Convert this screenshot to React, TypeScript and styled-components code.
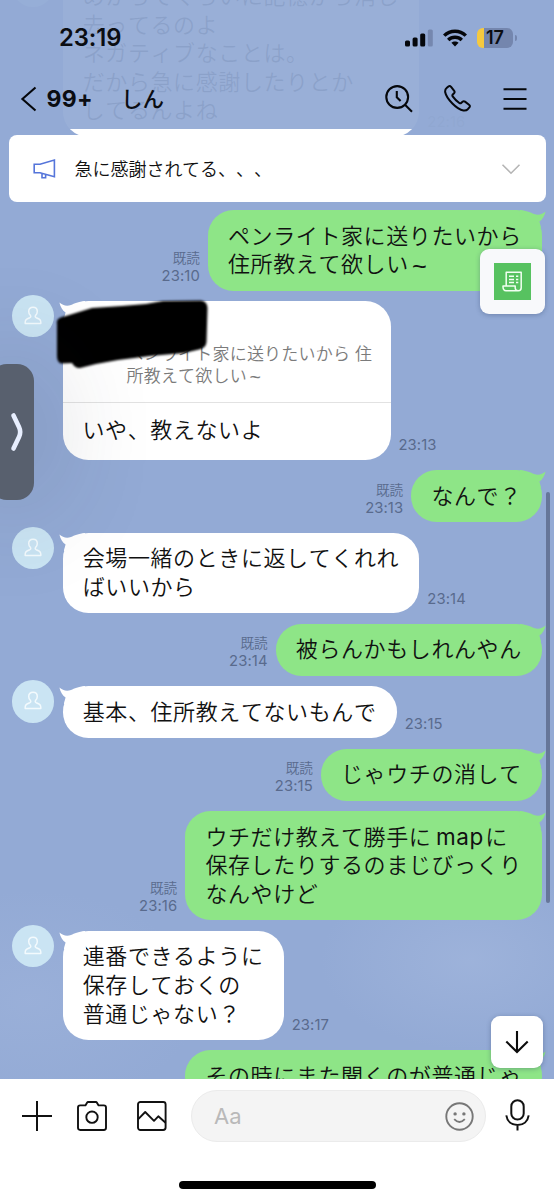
import React from "react";
import styled, { createGlobalStyle } from "styled-components";

const GlobalStyle = createGlobalStyle`
  * { box-sizing: border-box; }
  body { margin: 0; background: #fff; }
`;

const Screen = styled.div`
  position: relative;
  width: 554px;
  height: 1200px;
  display: flex;
  flex-direction: column;
  overflow: hidden;
  background: #fff;
  color: #111;
  font-family: Inter, "Noto Sans CJK JP", sans-serif;
  text-spacing-trim: space-all;
`;

const Chat = styled.main`
  position: relative;
  height: 1079px;
  flex: none;
  overflow: hidden;
  display: flex;
  flex-direction: column;
  justify-content: flex-start;
  gap: 10.25px;
  background:
    radial-gradient(ellipse 150px 90px at 470px 960px, rgba(164, 184, 222, 0.6), transparent),
    radial-gradient(ellipse 170px 110px at 30px 1000px, rgba(158, 179, 219, 0.6), transparent),
    #93aad5;
`;

const MessageRow = styled.div<{ $sent?: boolean }>`
  display: flex;
  flex: none;
  flex-direction: ${(p) => (p.$sent ? "row-reverse" : "row")};
  align-items: flex-end;
  padding: 0 12px 0 11.5px;
`;

const EarlierRow = styled(MessageRow)`
  margin-top: -29.8px;
  margin-bottom: 62.9px;
`;

const Avatar = styled.div`
  width: 42.5px;
  height: 42.5px;
  margin-top: -6px;
  margin-right: 8.5px;
  align-self: flex-start;
  flex: none;
  border-radius: 50%;
  background: #cae4f3;
  display: flex;
  align-items: center;
  justify-content: center;
`;

const Bubble = styled.div<{ $sent?: boolean }>`
  position: relative;
  flex: none;
  padding: 11.8px 20.2px;
  border-radius: 25.5px;
  background: ${(p) => (p.$sent ? "#8ee587" : "#fff")};
  font-size: 22px;
  font-weight: 350;
  font-kerning: none;
  letter-spacing: 0.6px;
  line-height: 28.6px;
  white-space: nowrap;
`;

const ReplyBubble = styled(Bubble)`
  width: 328px;
  height: 159px;
  padding: 0;
`;

const Quote = styled.div`
  height: 102px;
  padding: 42px 0 0 64px;
  border-bottom: 1px solid #e2e2e2;
  color: #7b7b7b;
  font-size: 17px;
  letter-spacing: 0.2px;
  line-height: 22px;
`;

const ReplyText = styled.div`
  padding: 13px 20px 0;
`;

const Tilde = styled.span`
  position: relative;
  top: 0.12em;
  margin-left: 0.13em;
  font-family: "Liberation Sans", sans-serif;
  font-size: 1.15em;
  line-height: 1;
`;

const Latin = styled.span`
  margin: 0 1.5px 0 4.5px;
  font-size: 22.5px;
  font-weight: 400;
  line-height: 1;
`;

const TailSvg = styled.svg<{ $sent?: boolean }>`
  position: absolute;
  top: 0;
  ${(p) => (p.$sent ? "right: -4px; transform: scaleX(-1);" : "left: -4px;")}
`;

const Scribble = styled.svg`
  position: absolute;
  left: -13px;
  top: -6px;
`;

const Meta = styled.div<{ $sent?: boolean }>`
  padding: 0 8px 5.5px;
  text-align: ${(p) => (p.$sent ? "right" : "left")};
  color: #596a8d;
  font-size: 14.8px;
  line-height: 18px;
  letter-spacing: 0.1px;
`;

const ReadMark = styled.div`
  font-size: 13.6px;
  font-weight: 350;
  letter-spacing: 0;
`;

const Header = styled.header`
  position: absolute;
  inset: 0 0 auto 0;
  height: 129px;
  display: flex;
  flex-direction: column;
  background: rgba(147, 170, 213, 0.945);
  color: #0b0d12;
`;

const StatusBar = styled.div`
  display: flex;
  align-items: center;
  height: 72px;
  padding: 3px 41px 0 59px;
`;

const Clock = styled.div`
  flex: 1;
  font-size: 23.8px;
  font-weight: 600;
  letter-spacing: -0.1px;
`;

const StatusIcons = styled.div`
  display: flex;
  align-items: center;
  gap: 10px;
`;

const Battery = styled.div`
  position: relative;
  width: 36px;
  height: 20px;
  border-radius: 6px;
  background: linear-gradient(90deg, #f5c93f 0 7px, #7486ae 7px);
  font-size: 18px;
  font-weight: 600;
  line-height: 20px;
  text-align: center;
  &::after {
    content: "";
    position: absolute;
    right: -3.5px;
    top: 7px;
    width: 2px;
    height: 6px;
    border-radius: 0 2px 2px 0;
    background: #7486ae;
  }
`;

const NavBar = styled.nav`
  display: flex;
  align-items: center;
  height: 53px;
  padding: 0 27.5px 0 20px;
`;

const Unread = styled.span`
  margin-left: 9.5px;
  width: 74.5px;
  font-size: 23px;
  font-weight: 650;
  letter-spacing: 0.3px;
`;

const ChatTitle = styled.h1`
  flex: 1;
  margin: -3px 0 0;
  font-size: 21.5px;
  font-weight: 500;
`;

const NavIcons = styled.div`
  display: flex;
  align-items: center;
  gap: 31.5px;
`;

const Announcement = styled.section`
  position: absolute;
  left: 8.5px;
  right: 8.5px;
  top: 135px;
  height: 67px;
  padding: 0 24.5px 0 24px;
  display: flex;
  align-items: center;
  border-radius: 8px;
  background: #fff;
  font-size: 18px;
  font-weight: 350;
`;

const AnnouncementText = styled.span`
  flex: 1;
  margin: -2px 0 0 19px;
`;

const FloatingButton = styled.button<{ $top: number; $right: number; $size: number; $tint: string }>`
  position: absolute;
  top: ${(p) => p.$top}px;
  right: ${(p) => p.$right}px;
  width: ${(p) => p.$size}px;
  height: ${(p) => p.$size}px;
  padding: 0;
  border: 0;
  border-radius: 9px;
  background: ${(p) => p.$tint};
  box-shadow: 0 1px 5px rgba(30, 50, 90, 0.32);
  display: flex;
  align-items: center;
  justify-content: center;
`;

const NoteTile = styled.span`
  width: 37px;
  height: 37px;
  display: flex;
  align-items: center;
  justify-content: center;
  background: #57c260;
`;

const ScrollThumb = styled.div`
  position: absolute;
  right: 4px;
  top: 492px;
  width: 4.5px;
  height: 411px;
  border-radius: 3px;
  background: #667699;
`;

const EdgeHandle = styled.div`
  position: absolute;
  left: -10px;
  top: 364px;
  width: 44px;
  height: 136px;
  border-radius: 17px;
  background: #58606e;
  box-shadow: 0 0 110px 10px rgba(40, 45, 60, 0.2);
  display: flex;
  align-items: center;
  padding-left: 18.5px;
`;

const Composer = styled.footer`
  position: relative;
  flex: 1;
  display: flex;
  align-items: flex-start;
  padding: 11px 24px 0 22px;
  background: #fff;
`;

const ComposerTools = styled.div`
  display: flex;
  align-items: center;
  height: 52px;
  width: 169px;
`;

const ToolSlot = styled.span<{ $gap: number }>`
  display: flex;
  margin-right: ${(p) => p.$gap}px;
`;

const Field = styled.div`
  width: 295px;
  height: 52px;
  padding: 0 11px 0 22px;
  display: flex;
  align-items: center;
  justify-content: space-between;
  border: 1px solid #ebebeb;
  border-radius: 26px;
  background: #f4f4f4;
  color: #b9b9b9;
  font-size: 22px;
`;

const MicSlot = styled.div`
  height: 49px;
  margin-left: 18.5px;
  display: flex;
  align-items: center;
`;

const HomeIndicator = styled.div`
  position: absolute;
  left: 179px;
  top: 102px;
  width: 197px;
  height: 7.5px;
  border-radius: 4px;
  background: #000;
`;

const Tail = ({ sent }: { sent?: boolean }) => (
  <TailSvg $sent={sent} width="28" height="20" viewBox="0 0 28 20">
    <path
      d="M0.4 1.5 C3.6 4.4 7.6 5.4 12 4 C15.5 2.6 19 0.6 26 0 L27 18 L5 18 C5.3 15.6 6.2 13.2 6.6 11.6 C3.4 9.4 1.3 5.8 0.4 1.5Z"
      fill={sent ? "#8ee587" : "#fff"}
    />
  </TailSvg>
);

const Person = () => (
  <Avatar>
    <svg width="18" height="20" viewBox="0 0 18 20" fill="none" stroke="#f3fafd" strokeWidth="1.5" strokeLinejoin="round">
      <path d="M9 1.2C6.4 1.2 4.7 3 4.7 5.4C4.7 7.2 5.6 8.6 6.5 9.6C7 10.4 6.8 11.2 5.8 11.7L3 13C1.8 13.6 1.2 14.6 1.2 16V17.6H16.8V16C16.8 14.6 16.2 13.6 15 13L12.2 11.7C11.2 11.2 11 10.4 11.5 9.6C12.4 8.6 13.3 7.2 13.3 5.4C13.3 3 11.6 1.2 9 1.2Z" />
    </svg>
  </Avatar>
);

const Lines = ({ lines }: { lines: React.ReactNode[] }) => (
  <>
    {lines.map((line, i) => (
      <div key={i}>{line}</div>
    ))}
  </>
);

const Sent = ({ lines, time }: { lines: React.ReactNode[]; time?: string }) => (
  <MessageRow $sent>
    <Bubble $sent>
      <Tail sent />
      <Lines lines={lines} />
    </Bubble>
    {time && (
      <Meta $sent>
        <ReadMark>既読</ReadMark>
        {time}
      </Meta>
    )}
  </MessageRow>
);

const Received = ({ lines, time }: { lines: React.ReactNode[]; time: string }) => (
  <MessageRow>
    <Person />
    <Bubble>
      <Tail />
      <Lines lines={lines} />
    </Bubble>
    <Meta>{time}</Meta>
  </MessageRow>
);

export default function App() {
  return (
    <Screen>
      <GlobalStyle />
      <Chat>
        <EarlierRow>
          <Person />
          <Bubble>
            <Lines
              lines={["めからてくらいに記憶から消し", "去ってるのよ", "ネガティブなことは。", "だから急に感謝したりとか", "してるんよね"]}
            />
          </Bubble>
          <Meta>22:16</Meta>
        </EarlierRow>
        <Sent lines={["ペンライト家に送りたいから", <>住所教えて欲しい<Tilde>~</Tilde></>]} time="23:10" />
        <MessageRow>
          <Person />
          <ReplyBubble>
            <Tail />
            <Quote>
              ペンライト家に送りたいから 住
              <br />
              所教えて欲しい<Tilde>~</Tilde>
            </Quote>
            <ReplyText>いや、教えないよ</ReplyText>
            <Scribble width="164" height="80" viewBox="50 295 164 80">
              <defs>
                <filter id="soft">
                  <feGaussianBlur stdDeviation="0.9" />
                </filter>
              </defs>
              <path
                filter="url(#soft)"
                d="M57 324C56 319 60 317 66 316L92 308L122 306L146 304L163 301L201 300.5Q207 301 207.5 308L206.5 342Q206 348 199 349.5L184 353L150 356L118 360L96 364L80 368Q75 368.5 72 363L61 363.5Q57 362 57 356Z"
              />
            </Scribble>
          </ReplyBubble>
          <Meta>23:13</Meta>
        </MessageRow>
        <Sent lines={["なんで？"]} time="23:13" />
        <Received lines={["会場一緒のときに返してくれれ", "ばいいから"]} time="23:14" />
        <Sent lines={["被らんかもしれんやん"]} time="23:14" />
        <Received lines={["基本、住所教えてないもんで"]} time="23:15" />
        <Sent lines={["じゃウチの消して"]} time="23:15" />
        <Sent
          lines={[<>ウチだけ教えて勝手に<Latin>map</Latin>に</>, "保存したりするのまじびっくり", "なんやけど"]}
          time="23:16"
        />
        <Received lines={["連番できるように", "保存しておくの", "普通じゃない？"]} time="23:17" />
        <Sent lines={["その時にまた聞くのが普通じゃ"]} />

        <ScrollThumb />
        <EdgeHandle>
          <svg width="16" height="42" viewBox="0 0 16 42" fill="none" stroke="#e8efff" strokeWidth="4.6" strokeLinecap="round" strokeLinejoin="round">
            <path d="M4.5 4.5L10 16Q12.4 21 10 26L4.5 37.5" />
          </svg>
        </EdgeHandle>
        <Header>
          <StatusBar>
            <Clock>23:19</Clock>
            <StatusIcons>
              <svg width="28" height="18" viewBox="0 0 28 18" fill="#05070b">
                <rect x="0" y="11.5" width="5" height="6" rx="1.5" />
                <rect x="7.6" y="8.6" width="5" height="8.9" rx="1.5" />
                <rect x="15.2" y="4.6" width="5" height="12.9" rx="1.5" />
                <rect x="22.8" y="0.4" width="5" height="17.1" rx="1.5" fill="#7587af" />
              </svg>
              <svg width="24" height="18" viewBox="0 0 24 18" fill="none" stroke="#05070b" strokeWidth="3.4">
                <path d="M1.2 6.6C7.2 0.7 16.8 0.7 22.8 6.6" />
                <path d="M5.2 11C9 7.3 15 7.3 18.8 11" />
                <path d="M12 17.4L8.4 13.8C10.4 12 13.6 12 15.6 13.8Z" fill="#05070b" stroke="none" />
              </svg>
              <Battery>17</Battery>
            </StatusIcons>
          </StatusBar>
          <NavBar>
            <svg width="17" height="26" viewBox="0 0 17 26" fill="none" stroke="#05070b" strokeWidth="2.1">
              <path d="M15.5 1.5L2.4 13L15.5 24.5" />
            </svg>
            <Unread>99+</Unread>
            <ChatTitle>しん</ChatTitle>
            <NavIcons>
              <svg width="28" height="28" viewBox="0 0 28 28" fill="none" stroke="#05070b" strokeWidth="2.1">
                <circle cx="12.2" cy="12" r="10.9" />
                <path d="M20 19.7L27 26.7M11.8 6V12.2L15.6 16" />
              </svg>
              <svg width="27" height="27" viewBox="0 0 27 27" fill="none" stroke="#05070b" strokeWidth="2" strokeLinejoin="round">
                <path d="M2.6 3.1L4.4 1.5Q5.8 .5 7.1 1.9L10.2 5.8Q11.1 7.1 10 8.3L8.8 9.5Q8 10.4 8.7 11.4Q11.4 15.3 15.3 18Q16.3 18.7 17.2 17.9L18.5 16.7Q19.7 15.7 21 16.6L25 19.7Q26.5 20.9 25.4 22.3L23.8 24.2Q22.3 25.8 19.4 25.5Q14.5 24.7 8.4 18.5Q2.2 12.3 1.2 7.3Q.8 4.6 2.6 3.1Z" />
              </svg>
              <svg width="24" height="24" viewBox="0 0 24 24" stroke="#05070b" strokeWidth="2">
                <path d="M.5 2.2H23.5M.5 12H23.5M.5 21.8H23.5" />
              </svg>
            </NavIcons>
          </NavBar>
        </Header>
        <Announcement>
          <svg width="23" height="22" viewBox="0 0 23 22" fill="none" stroke="#5575da" strokeWidth="1.6">
            <path d="M1.2 6.2H7L21.4 2V18.8L7 14.7H1.2ZM9 15.3V19.8H12.6V16.4" />
          </svg>
          <AnnouncementText>急に感謝されてる、、、</AnnouncementText>
          <svg width="20" height="12" viewBox="0 0 20 12" fill="none" stroke="#b5b5b5" strokeWidth="1.6">
            <path d="M1.5 1.8L10 10.2L18.5 1.8" />
          </svg>
        </Announcement>
        <FloatingButton $top={249} $right={9} $size={65} $tint="#f8f9fb">
          <NoteTile>
            <svg width="21" height="21" viewBox="0 0 21 21" fill="none" stroke="#f2fff2" strokeWidth="1.5" strokeLinejoin="round">
              <path d="M4.2 14.5V1.3H19.2V16.7Q19.2 19.7 16.3 19.7H4Q1.2 19.7 1 16V15H13.2V17Q13.4 19.5 16 19.7" />
              <path d="M7 5.3H12M14 5.3H16.3M7 8.4H12M14 8.4H16.3M7 11.5H12M14 11.5H16.3" />
            </svg>
          </NoteTile>
        </FloatingButton>
        <FloatingButton $top={1016} $right={11} $size={52} $tint="#fff">
          <svg width="24" height="24" viewBox="0 0 24 24" fill="none" stroke="#0c0c0c" strokeWidth="2.1">
            <path d="M12 1V22M1.3 11.5L12 22L22.7 11.5" />
          </svg>
        </FloatingButton>
      </Chat>
      <Composer>
        <ComposerTools>
          <ToolSlot $gap={25}>
            <svg width="30" height="30" viewBox="0 0 30 30" stroke="#111" strokeWidth="2">
              <path d="M15 0V30M0 15H30" />
            </svg>
          </ToolSlot>
          <ToolSlot $gap={29.5}>
            <svg width="30" height="30" viewBox="0 0 30 30" fill="none" stroke="#111" strokeWidth="1.9" strokeLinejoin="round">
              <path d="M3.2 4.4H8.4L10.2 1.5Q10.5 1 11 1H19Q19.5 1 19.8 1.5L21.6 4.4H26.8Q29 4.4 29 6.6V26.8Q29 29 26.8 29H3.2Q1 29 1 26.8V6.6Q1 4.4 3.2 4.4Z" />
              <circle cx="15" cy="16.2" r="5.7" />
            </svg>
          </ToolSlot>
          <ToolSlot $gap={0}>
            <svg width="30" height="30" viewBox="0 0 30 30" fill="none" stroke="#111" strokeWidth="1.9" strokeLinejoin="round">
              <rect x="1" y="1" width="27.6" height="28" rx="2.4" />
              <path d="M1 18.3L8.2 11L17 19.8L21.3 15.3L28.6 21.8" />
            </svg>
          </ToolSlot>
        </ComposerTools>
        <Field>
          Aa
          <svg width="29" height="29" viewBox="0 0 29 29" fill="none" stroke="#777" strokeWidth="1.9">
            <circle cx="14.5" cy="14.5" r="13.2" />
            <path d="M9.2 17.2Q14.5 22.8 19.8 17.2" />
            <circle cx="10.1" cy="11.9" r="1.7" fill="#777" stroke="none" />
            <circle cx="18.9" cy="11.9" r="1.7" fill="#777" stroke="none" />
          </svg>
        </Field>
        <MicSlot>
          <svg width="25" height="32" viewBox="0 0 25 32" fill="none" stroke="#111" strokeWidth="2">
            <rect x="6.3" y="1.2" width="12.4" height="19.4" rx="6.2" />
            <path d="M1.3 16.3C2.2 22.4 6.6 26 12.5 26S22.8 22.4 23.7 16.3M12.5 26V31.5" />
          </svg>
        </MicSlot>
        <HomeIndicator />
      </Composer>
    </Screen>
  );
}
